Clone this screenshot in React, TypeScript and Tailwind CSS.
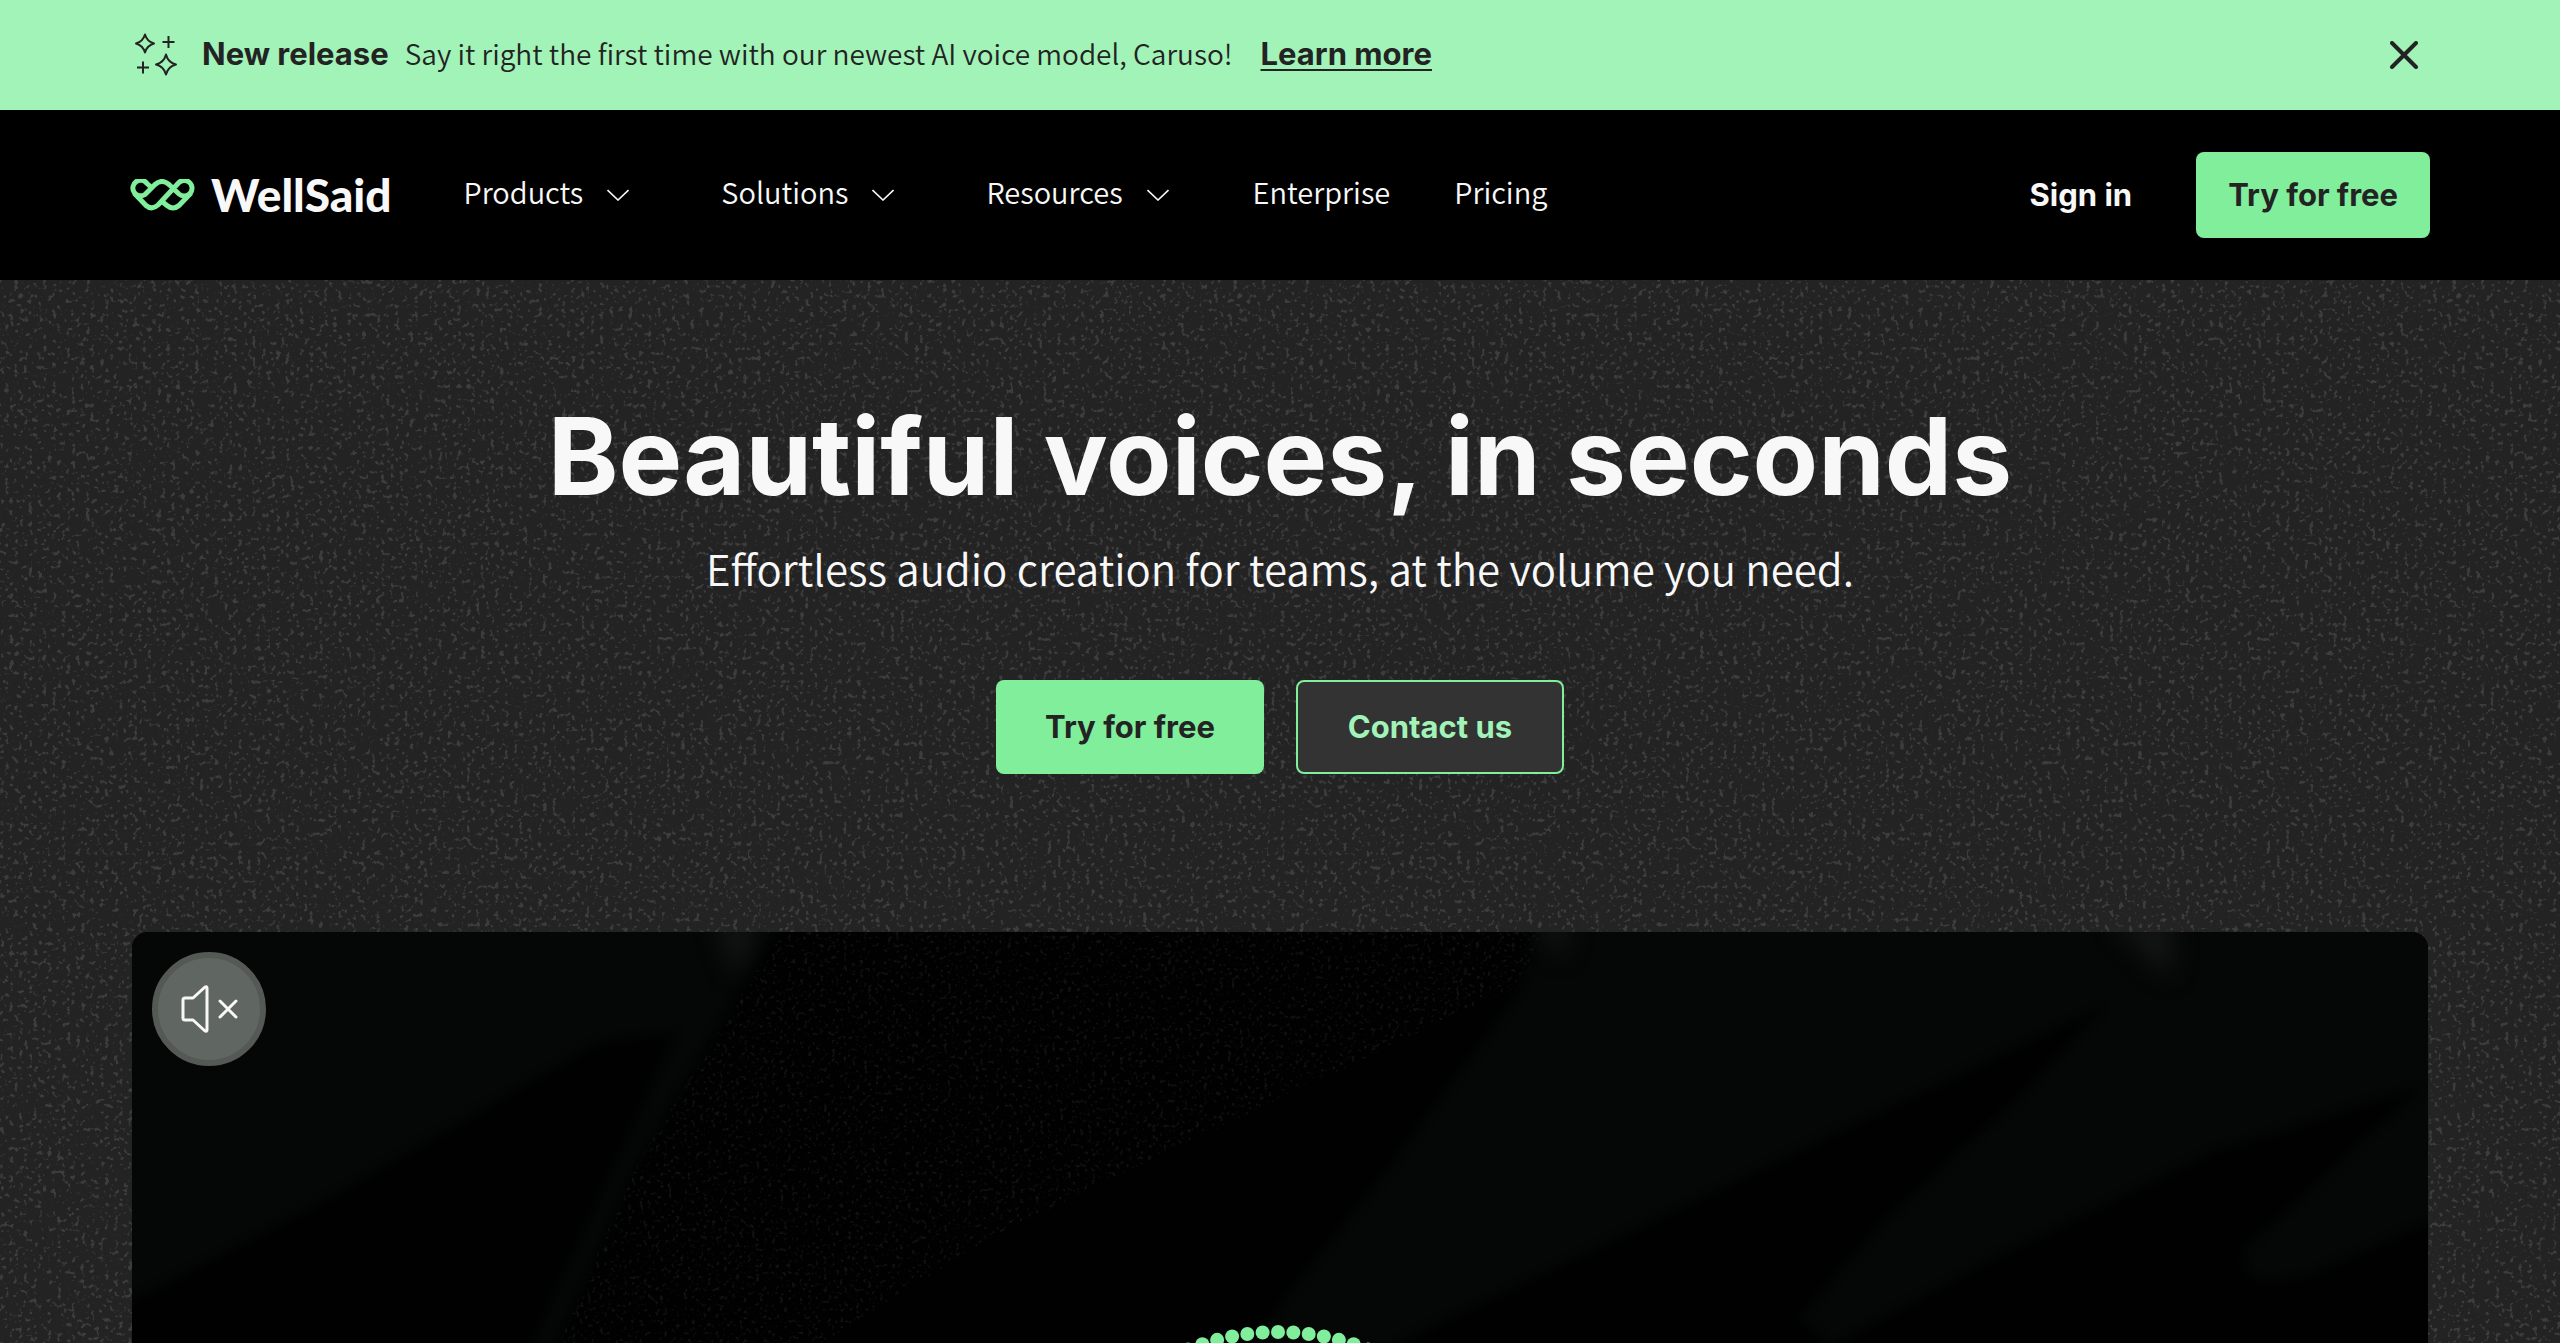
import React from "react";

const display = "font-['Inter',sans-serif]";

function Sparkles() {
  return (
    <svg className="size-11" viewBox="0 0 44 44" fill="none" stroke="#232323" strokeWidth="2" strokeLinejoin="round" aria-hidden="true">
      <path d="M11 1.500Q13 8.500 20 10.500Q13 12.500 11 19.500Q9 12.500 2 10.500Q9 8.500 11 1.500Z" />
      <path d="M32 21.500Q34 29.500 42 31.500Q34 33.500 32 41.500Q30 33.500 22 31.500Q30 29.500 32 21.500Z" />
      <path d="M34.500 3V15M28.500 9H40.500M9 28.500V40.500M3 34.500H15" />
    </svg>
  );
}

function Chevron() {
  return (
    <svg className="h-3 w-[22px]" viewBox="0 0 22 12" fill="none" stroke="#f8f8f8" strokeWidth="1.600" aria-hidden="true">
      <path d="M0.500 1L11 11L21.500 1" />
    </svg>
  );
}

function LogoMark() {
  return (
    <svg className="h-8 w-[65px]" viewBox="0 0 65 32" fill="none" stroke="#80ee9b" strokeWidth="5" strokeLinejoin="round" aria-hidden="true">
      <path d="M22 9L17 4.500A7.800 7.800 0 1 0 15 15.500L25 5.500Q32 -0.500 39 5.500L49 15A7.800 7.800 0 1 0 48 4.500L28 26Q22 31.500 16 26.500L4 14" />
      <path d="M61 14L49 26.500Q43 31.500 37 26.500L32 22.500" />
    </svg>
  );
}

const menu = ["Products", "Solutions", "Resources"];

function Grain() {
  return (
    <svg className="absolute inset-0 size-full" aria-hidden="true">
      <filter id="grain" x="0" y="0" width="100%" height="100%" colorInterpolationFilters="sRGB">
        <feTurbulence type="fractalNoise" baseFrequency="0.210" numOctaves="2" seed="4" />
        <feColorMatrix values="0 0 0 0 0.240  0 0 0 0 0.240  0 0 0 0 0.240  8 0 0 0 -4.700" />
      </filter>
      <rect width="100%" height="100%" filter="url(#grain)" />
    </svg>
  );
}

const dots = Array.from({ length: 98 }, (_, i) => (i / 98) * Math.PI * 2);

function VideoFrame() {
  return (
    <svg className="absolute inset-0 size-full" viewBox="0 0 2296 1292" preserveAspectRatio="xMidYMin slice" aria-hidden="true">
      <defs>
        <filter id="soft" colorInterpolationFilters="sRGB"><feGaussianBlur stdDeviation="4" /></filter>
        <filter id="glow" x="-100%" y="-100%" width="300%" height="300%" colorInterpolationFilters="sRGB"><feGaussianBlur stdDeviation="12" /></filter>
        <filter id="dust" x="0" y="0" width="100%" height="100%" colorInterpolationFilters="sRGB">
          <feTurbulence type="fractalNoise" baseFrequency="0.250" numOctaves="2" seed="9" />
          <feColorMatrix values="0 0 0 0 0.060  0 0 0 0 0.070  0 0 0 0 0.070  6 0 0 0 -3.500" result="n" />
          <feComposite in="n" in2="SourceGraphic" operator="in" />
        </filter>
      </defs>
      <rect width="2296" height="1292" fill="#040706" />
      <g fill="#151717" filter="url(#glow)">
        <path d="M585 -10H625L605 45Z" />
        <path d="M1980 -10H2040L2038 45Z" />
        <path d="M1405 -10H1438L1430 25Z" />
      </g>
      <g fill="#010101" filter="url(#soft)">
        <path d="M649 -10H1400L1390 55L1260 230L1110 420H420L500 240Z" />
        <path d="M543 101L467 111L190 271L-10 375V1300H390L400 411Z" />
        <path d="M1971 75L1675 216L1268 411V1300H1720L1690 408L1667 385L1750 290L1882 168Z" />
        <path d="M2289 155L2081 221L1860 328L1690 420V1300H2310V285L2180 342Q2105 365 2111 318L2222 215Z" />
      </g>
      <path d="M649 0H1410L1385 55L1319 85L859 305L690 411H428L500 240Z" fill="#fff" filter="url(#dust)" />
      <g fill="#80ee9b">
        {dots.map((a) => (
          <circle key={a} cx={1146 + 240 * Math.sin(a)} cy={640 - 240 * Math.cos(a)} r="7" />
        ))}
      </g>
    </svg>
  );
}

export default function App() {
  return (
    <div className="min-h-screen bg-black font-['Noto_Sans_CJK_SC',sans-serif] text-[#f8f8f8]">
      <aside className="flex h-[110px] items-center bg-[#a1f3b8] px-[134px] text-[#232323]">
        <Sparkles />
        <p className={`ml-6 flex items-baseline pb-1 text-[31px] leading-10 font-bold ${display}`}>
          <strong className="font-bold">New release</strong>
          <span className="ml-4 font-['Noto_Sans_CJK_SC',sans-serif] text-[28px] font-[350]">Say it right the first time with our newest AI voice model, Caruso!</span>
          <a href="#release" className="ml-7 underline decoration-2 underline-offset-4">Learn more</a>
        </p>
        <button type="button" aria-label="Close" className="ml-auto p-2">
          <svg className="size-7" viewBox="0 0 28 28" stroke="#232323" strokeWidth="4" strokeLinecap="round" aria-hidden="true">
            <path d="M2 2L26 26M26 2L2 26" />
          </svg>
        </button>
      </aside>

      <header className="flex h-[170px] items-center bg-black px-[130px] text-[29px] leading-10">
        <a href="#home" className="flex items-center gap-4">
          <LogoMark />
          <span className="font-['Lato',sans-serif] text-[46px] font-black leading-none">WellSaid</span>
        </a>
        <nav className="ml-[72px] flex items-center gap-16 pb-2 font-[350]">
          <div className="mr-5 flex gap-[92px]">
            {menu.map((name) => (
              <button key={name} type="button" className="flex items-center gap-6">
                {name}
                <span className="pt-2"><Chevron /></span>
              </button>
            ))}
          </div>
          <a href="#enterprise">Enterprise</a>
          <a href="#pricing">Pricing</a>
        </nav>
        <div className={`ml-auto flex items-center gap-16 text-[31px] font-bold ${display}`}>
          <a href="#signin">Sign in</a>
          <a href="#try" className="flex h-[86px] items-center rounded-lg bg-[#80ee9b] px-8 text-[#232323]">Try for free</a>
        </div>
      </header>

      <main className="relative overflow-hidden bg-[#232323] px-[132px] pt-[116px]">
        <Grain />
        <section className="relative flex flex-col items-center text-center">
          <h1 className={`text-[107px] font-bold leading-[120px] ${display}`}>Beautiful voices, in seconds</h1>
          <p className="mt-5 text-[42px] font-[350] leading-[64px]">Effortless audio creation for teams, at the volume you need.</p>
          <div className={`mt-20 flex gap-8 text-[31px] font-bold ${display}`}>
            <a href="#try" className="flex h-[94px] w-[268px] items-center justify-center rounded-lg bg-[#80ee9b] text-[#232323]">Try for free</a>
            <a href="#contact" className="flex h-[94px] w-[268px] items-center justify-center rounded-lg border-2 border-[#80ee9b] bg-[#333333] text-[#a1f3b8]">Contact us</a>
          </div>
        </section>
        <section className="relative mt-[158px] h-[411px] overflow-hidden rounded-t-2xl bg-black p-5">
          <VideoFrame />
          <button type="button" aria-label="Unmute" className="relative flex size-[114px] items-center justify-center rounded-full border-6 border-[#545955] bg-[#606661]">
            <svg className="h-12 w-[58px]" viewBox="0 0 58 48" fill="none" stroke="#f8f8f8" strokeWidth="3" strokeLinecap="round" strokeLinejoin="round" aria-hidden="true">
              <path d="M5 13H13L25 2Q27 1 27 3V45Q27 47 25 46L13 35H5Q3 35 3 33V15Q3 13 5 13Z" />
              <path d="M40 16L56 32M56 16L40 32" />
            </svg>
          </button>
        </section>
      </main>
    </div>
  );
}
